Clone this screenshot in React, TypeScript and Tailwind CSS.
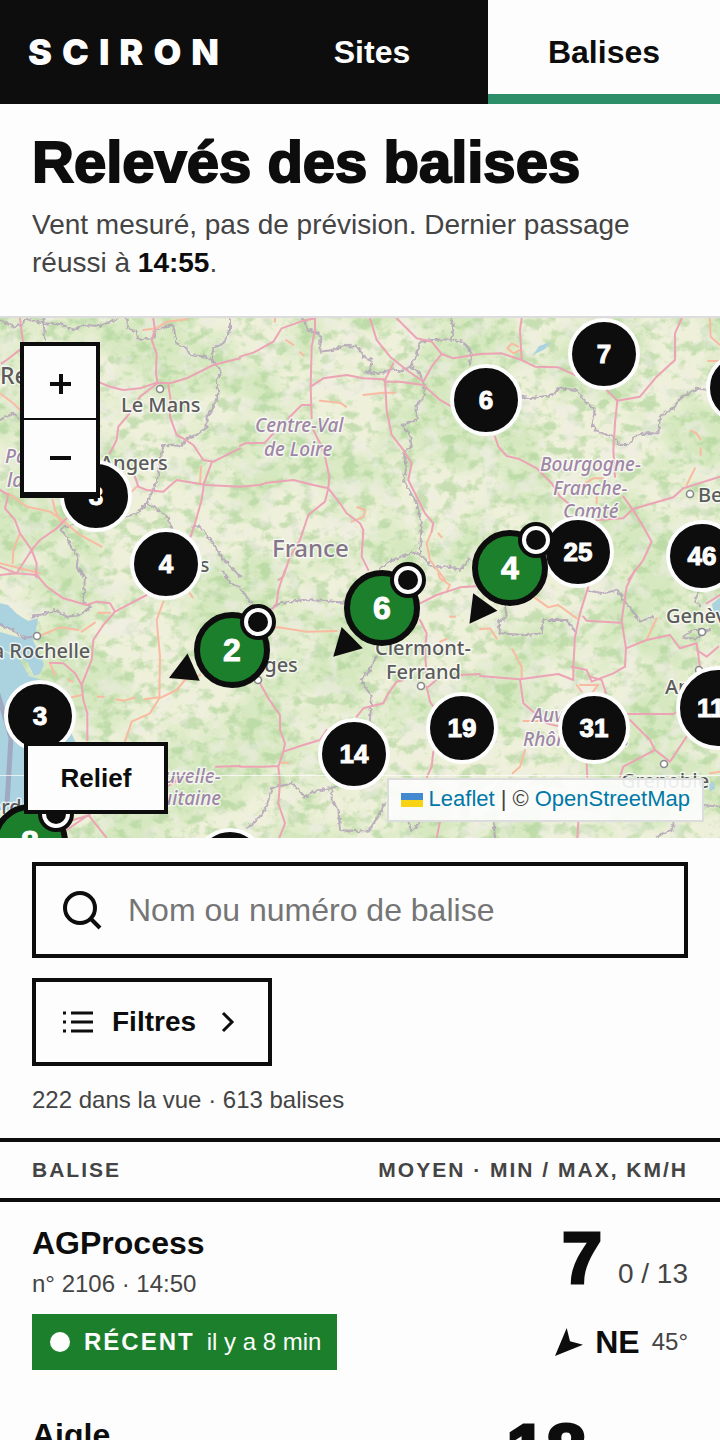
import { useState } from "react";
import { clsx } from "clsx";

type Cluster = { kind: "cluster"; x: number; y: number; count: number };
type Station = { kind: "station"; x: number; y: number; speed: number; heading: number };
type Marker = Cluster | Station;

// positions in map pixels, drawn north to south
const MARKERS: Marker[] = [
  { kind: "cluster", x: 604, y: 36, count: 7 },
  { kind: "cluster", x: 742, y: 70, count: 8 },
  { kind: "cluster", x: 486, y: 82, count: 6 },
  { kind: "cluster", x: 96, y: 178, count: 3 },
  { kind: "cluster", x: 578, y: 234, count: 25 },
  { kind: "cluster", x: 702, y: 238, count: 46 },
  { kind: "cluster", x: 166, y: 246, count: 4 },
  { kind: "station", x: 510, y: 250, speed: 4, heading: 216 },
  { kind: "station", x: 382, y: 290, speed: 6, heading: 225 },
  { kind: "station", x: 232, y: 332, speed: 2, heading: 246 },
  { kind: "cluster", x: 718, y: 390, count: 112 },
  { kind: "cluster", x: 40, y: 398, count: 3 },
  { kind: "cluster", x: 462, y: 410, count: 19 },
  { kind: "cluster", x: 594, y: 410, count: 31 },
  { kind: "cluster", x: 354, y: 436, count: 14 },
  { kind: "station", x: 30, y: 524, speed: 8, heading: 200 },
  { kind: "cluster", x: 230, y: 546, count: 5 },
];

type Tile = { x: number; y: number; motorways: string; trunks: string; borders: string };

const TILES: Tile[] = [
  {
    x: 0,
    y: -8,
    motorways:
      "M60 25L68 90 72 110 20 150 5 160M460 25L465 60 455 90 470 130 468 190 472 215M300 218L330 230 370 240 420 235 470 218 510 220 560 205 640 165 720 145M470 222L420 260 385 315 355 350 350 390 330 430M505 225L512 270 510 320 530 375 550 385 580 405 610 450 640 455 720 415M636 455L612 520 605 570 585 640 572 680M405 500L415 530 440 540 490 545 530 510 560 515 620 525 720 530M0 540L25 555 15 595 45 630 60 670 95 720 110 760 108 800M200 625L170 655 120 690 95 720 50 790 0 770",
    trunks:
      "M0 250L40 280 60 300M25 550L80 590 150 605 180 625 240 675 305 710M60 670L40 720 38 760M158 570L165 600 185 640M430 60L470 55 500 35 560 28M603 470L600 520M410 530L395 545M0 760L60 775 120 790",
    borders:
      "M0 30L40 50 65 45 80 25M85 30L130 40 180 42 220 60 250 45 300 48 350 28M130 25L135 90M380 25L385 55 410 65 415 88 460 85 465 60 520 45 530 100 560 115 570 135 620 140 650 165 665 190 650 210 655 250 640 290 620 320 620 350 590 375 560 385 545 410 520 405 490 405 485 430 475 500 450 560 440 580 410 610 380 620M440 580L470 595 505 625 515 660M690 25L690 60 670 100 640 115 635 145 650 165M180 655L200 680 215 715 235 740 230 770 250 800M180 655L240 640M580 650L600 650 640 700 660 735 720 800M0 330L40 310 60 325",
  },
  {
    x: 240,
    y: -8,
    motorways:
      "M0 140L40 128 100 95 125 55 190 32 225 25 225 60 215 110 212 230 215 325M212 230L250 205 320 195 370 205 430 208 435 215 480 215 550 225 600 270 635 290M390 25L410 90 450 140 500 180 550 215M470 25L530 85 575 95 605 132 640 145 720 132M605 132L575 170 550 215M460 160L435 210 440 300 455 375 490 420 515 460 505 510 540 580 555 610 580 640 575 665M215 285L185 285 145 325M0 408L15 400 75 398 100 370M220 360L240 400 255 440 268 500 265 535M0 530L60 525 80 518 160 510 220 525 265 535 300 580 320 610 360 640 370 660 365 740 385 780M265 535L255 575 205 615 180 690 150 740 130 800 115 810",
    trunks:
      "M138 90L160 105M180 127l12 10M240 272L300 278 318 290M370 255L430 248 465 248M352 592L375 600 372 620 335 635M575 665L560 700 570 750 615 810M595 670l10 12M105 25v10",
    borders:
      "M190 25L200 55 240 75 242 125 290 118 310 105 355 112 370 140 395 150 390 185 375 188 430 188 460 175 480 185 520 170M635 25L640 60 635 88 575 90 540 95 530 135 510 170 540 190 555 235 550 265 530 285 530 330 485 345 510 375 515 410 490 425 500 470 490 510 530 580 545 640 540 730 575 770 630 770 660 780 690 745M635 88L670 95 695 130 690 165M415 780L455 750 520 728 540 735",
  },
  {
    x: 480,
    y: -8,
    motorways:
      "M125 25L120 60 125 150M0 132L65 130 125 150 165 170 235 172 285 195M380 240L412 272 480 260 530 200 585 150 585 70 605 25M412 272L405 340 400 420 405 500M45 380L55 410 80 438 120 448 170 475 215 520 240 560 265 580M430 560L458 598 500 585 580 562 610 535 720 500M458 598L430 625 350 630M458 598L490 650 515 695 490 750 445 810",
    trunks:
      "M120 120L100 130 82 115 95 100 115 110M690 25L692 80 720 105M685 153h30M632 362L650 370 662 388M662 415v20M645 475L620 525M300 530L340 505 370 505M350 550v30",
    borders:
      "M125 260L150 265 220 255 235 235 290 240 315 275 345 300 335 340 350 365 400 380 420 405 445 405 465 378 500 370 535 370 540 320 580 295 605 260 655 235 680 240",
  },
  {
    x: 0,
    y: 252,
    motorways:
      "M0 15L50 10 110 15 140 50 190 85 260 105 290 95 330 100 345 125 440 75M345 125L310 165 280 210 275 270 245 345 250 390 262 430 262 510M150 278L190 280 225 310 245 345M648 590L720 588M500 650L550 620M200 780L265 735 320 804M270 735L220 750",
    trunks:
      "M125 195L180 172 235 180M245 185L285 158M295 128H330M490 95L470 150 480 260 478 385 530 360 555 330 600 315M478 385L450 430 395 455 375 515M215 382L245 375M293 380h18M348 388L370 392 405 383M435 388L478 382M570 70l8 12M150 280L165 315M205 330l12 5",
    borders:
      "M95 140L140 130 165 120 200 140 240 135 275 110 250 100 255 20 240 0M670 5L690 40 720 50M0 165L40 180 70 205 95 200",
  },
  {
    x: 240,
    y: 252,
    motorways:
      "M135 0L115 60 110 100 90 125M60 340L85 385 120 435 120 480 135 520 130 545 115 590 120 640 115 700 135 760 118 804M0 590L70 590 115 588M130 545L190 525 240 510 260 480M350 440L370 415 430 400 445 370 470 335 490 330M540 100L590 75 660 52 720 48M540 150L560 190 555 240 560 320M560 350L570 395 580 410M580 545L575 590 560 622M660 315L720 312M565 350L600 320M600 755L590 804",
    trunks: "M60 180L115 172 200 185 290 183M595 10L600 25 630 45 620 65M120 578h25M630 140h15M600 215l20 -8",
    borders:
      "M0 55L20 80 40 110 80 125 120 100 185 90 250 92 315 98M410 260L385 305 362 330 395 380 390 450M290 650L230 662 195 680 155 640 95 655 80 710 60 740 20 775M275 655L275 690 295 720 300 780 385 785 420 730 435 700M505 755L515 785 540 755",
  },
  {
    x: 480,
    y: 252,
    motorways:
      "M465 0L440 50 425 150 430 185 438 235 435 290 400 310 335 335 320 300 275 290M325 50L300 130 285 200 280 290 280 330 235 312 120 328 0 318M310 140L320 152 420 158M438 235L500 210 570 195 600 235 650 220 660 290M650 240L680 260 715 230M120 328L130 400 200 460 240 470M440 432L580 432 600 420M450 450L510 510 525 540 430 590 420 620M525 540L570 575 620 500M320 580L322 620M330 320L365 330 378 370M680 100L720 75M295 755L292 804",
    trunks:
      "M160 80L205 112 235 105 290 145M97 238L125 290 125 325M530 145L500 210M290 345L305 365M300 345H355L335 370M0 178L30 175 50 205M135 540L120 590 98 610M130 453h60M690 610L720 605",
    borders:
      "M325 62L370 70 410 60 440 100 480 155 520 140M75 105L80 140 55 155 60 190 140 195 185 190 190 150 260 150 290 190M655 70L645 90 660 110M610 200L640 180 690 180 650 205 615 205M40 750L45 804M580 760L575 780 530 800M670 705L720 710",
  },
];

const TOWNS = [
  { x: 0, y: 66, name: "Rennes", size: 23 },
  { x: 121, y: 94, name: "Le Mans", size: 20 },
  { x: 100, y: 152, name: "Angers", size: 20 },
  { x: 137, y: 254, name: "Poitiers", size: 20 },
  { x: 217, y: 354, name: "Limoges", size: 20 },
  { x: -18, y: 340, name: "La Rochelle", size: 20 },
  { x: 375, y: 337, name: "Clermont-", size: 20 },
  { x: 386, y: 361, name: "Ferrand", size: 20 },
  { x: 698, y: 184, name: "Besançon", size: 20 },
  { x: 666, y: 305, name: "Genève", size: 20 },
  { x: 665, y: 376, name: "Annecy", size: 20 },
  { x: 621, y: 470, name: "Grenoble", size: 20 },
  { x: -24, y: 496, name: "Bordeaux", size: 20 },
];

const REGIONS = [
  { x: 5, y: 145, name: "Pays de" },
  { x: 7, y: 169, name: "la Loire" },
  { x: 255, y: 114, name: "Centre-Val" },
  { x: 264, y: 138, name: "de Loire" },
  { x: 540, y: 153, name: "Bourgogne-" },
  { x: 553, y: 177, name: "Franche-" },
  { x: 563, y: 200, name: "Comté" },
  { x: 140, y: 465, name: "Nouvelle-" },
  { x: 139, y: 487, name: "Aquitaine" },
  { x: 532, y: 404, name: "Auvergne-" },
  { x: 523, y: 428, name: "Rhône-Alpes" },
];

const TOWN_DOTS = [
  [160, 71],
  [37, 318],
  [421, 368],
  [690, 176],
  [702, 314],
  [664, 446],
  [258, 362],
  [699, 352],
];

const STATIONS = [
  { name: "AGProcess", id: "2106", time: "14:50", age: "il y a 8 min", mean: 7, min: 0, max: 13, dir: "NE", deg: 45 },
  { name: "Aigle", id: "1714", time: "14:48", age: "il y a 10 min", mean: 18, min: 14, max: 22, dir: "NE", deg: 50 },
];

function BaseMap() {
  return (
    <svg
      className="block h-full w-full"
      viewBox="0 0 720 520"
      preserveAspectRatio="xMidYMid slice"
      aria-hidden="true"
    >
      <defs>
        <filter id="woods" x="0" y="0" width="100%" height="100%" colorInterpolationFilters="sRGB">
          <feTurbulence type="fractalNoise" baseFrequency="0.07 0.085" numOctaves="4" seed="11" />
          <feColorMatrix values="0 0 0 0 0.66  0 0 0 0 0.82  0 0 0 0 0.58  5 0 0 0 -2.4" />
        </filter>
        <filter id="meadows" x="0" y="0" width="100%" height="100%" colorInterpolationFilters="sRGB">
          <feTurbulence type="fractalNoise" baseFrequency="0.01 0.012" numOctaves="6" seed="4" />
          <feColorMatrix values="0 0 0 0 0.8  0 0 0 0 0.9  0 0 0 0 0.71  0 5 0 0 -2.1" />
        </filter>
        <filter id="towns" x="0" y="0" width="100%" height="100%" colorInterpolationFilters="sRGB">
          <feTurbulence type="fractalNoise" baseFrequency="0.05" numOctaves="5" seed="23" />
          <feColorMatrix values="0 0 0 0 0.94  0 0 0 0 0.93  0 0 0 0 0.9  0 0 5 0 -2.5" />
        </filter>
        <filter id="wiggle" x="-5%" y="-5%" width="110%" height="110%" colorInterpolationFilters="sRGB">
          <feTurbulence type="fractalNoise" baseFrequency="0.1" numOctaves="1" seed="7" />
          <feDisplacementMap in="SourceGraphic" scale="16" xChannelSelector="R" yChannelSelector="G" />
        </filter>
      </defs>

      <rect width="720" height="520" fill="#eef0d9" />
      <rect width="720" height="520" filter="url(#meadows)" opacity="0.7" />
      <rect width="720" height="520" filter="url(#woods)" opacity="0.55" />
      <rect width="720" height="520" filter="url(#towns)" opacity="0.55" />

      {/* water */}
      <g fill="#aad3df">
        <path d="M-6 284L8 287 17 296 28 303 38 300 36 313 33 322 44 346 40 356 34 358 28 345 14 336 0 331 20 342 29 358 48 364 66 404 76 425 76 440 26 440 25 492-6 492Z" />
        <path d="M533 37l6-9 12-4-6 7z" />
        <path d="M712 286l10-8v14l-8 6z" />
        <path d="M708 466l6-2 1 7-5 2z" />
      </g>
      <path d="M0 308l14 4 12 9-12-3-14-4z" fill="#e6ecd0" />
      <path d="M-4 370L4 396 11 420 7 486" fill="none" stroke="#9a97b5" strokeWidth="5" opacity="0.7" />

      <g fill="none" strokeLinejoin="round" strokeLinecap="round">
        {TILES.map((tile) => (
          <g key={`${tile.x}:${tile.y}`} transform={`translate(${tile.x} ${tile.y}) scale(0.3333)`}>
            <path d={tile.borders} stroke="#b3a3b8" strokeWidth="6" opacity="0.85" filter="url(#wiggle)" />
            <path d={tile.trunks} stroke="#f8bba2" strokeWidth="6" />
            <path d={tile.motorways} stroke="#eda3b6" strokeWidth="6" />
          </g>
        ))}
      </g>

      {TOWN_DOTS.map(([x, y]) => (
        <circle key={`${x}-${y}`} cx={x} cy={y} r="3.5" fill="#fff" stroke="#8a8a8a" strokeWidth="1.6" />
      ))}

      <g
        fontFamily="'Noto Sans', sans-serif"
        fontWeight="500"
        stroke="#fff"
        strokeOpacity="0.7"
        strokeWidth="3"
        strokeLinejoin="round"
        paintOrder="stroke"
      >
        {TOWNS.map((town) => (
          <text key={town.name} x={town.x} y={town.y} fontSize={town.size} fill="#5c5c5c">
            {town.name}
          </text>
        ))}
        {REGIONS.map((region) => (
          <text key={region.name} x={region.x} y={region.y} fontSize="19" fontStyle="italic" fill="#9f86a6">
            {region.name}
          </text>
        ))}
        <text x="272" y="239" fontSize="24" fill="#84758a">
          France
        </text>
      </g>
      <path d="M0 457.5H720" stroke="#fff" strokeOpacity="0.7" />
    </svg>
  );
}

function ClusterMarker({ x, y, count }: Cluster) {
  return (
    <button
      type="button"
      aria-label={`${count} balises`}
      className={clsx(
        "absolute flex -translate-x-1/2 -translate-y-1/2 items-center justify-center rounded-full border-4 border-[#fdfdfd] bg-[#0d0d0d] text-[26px] leading-8 font-bold text-[#fdfdfd] [-webkit-text-stroke:1px_#fdfdfd]",
        count >= 100 ? "size-[84px]" : "size-[72px]"
      )}
      style={{ left: x, top: y }}
    >
      {count}
    </button>
  );
}

function StationMarker({ x, y, speed, heading }: Station) {
  return (
    <button
      type="button"
      aria-label={`${speed} km/h`}
      className="absolute flex size-[76px] -translate-x-1/2 -translate-y-1/2 items-center justify-center rounded-full border-6 border-[#0d0d0d] bg-[#1b7f2c] text-[32px] font-bold text-[#fdfdfd] [-webkit-text-stroke:1px_#fdfdfd]"
      style={{ left: x, top: y }}
    >
      <svg className="absolute -inset-[38px] size-[140px]" viewBox="-70 -70 140 140" aria-hidden="true">
        <polygon points="0,-69 -15,-42 15,-42" fill="#0d0d0d" transform={`rotate(${heading})`} />
      </svg>
      <span className="relative">{speed}</span>
      <span className="absolute -top-3.5 -right-3 size-9 rounded-full border-4 border-[#0d0d0d] bg-[#fdfdfd] p-1">
        <span className="block size-full rounded-full bg-[#0d0d0d]" />
      </span>
    </button>
  );
}

function WindMap() {
  const [relief, setRelief] = useState(false);

  return (
    <section aria-label="Carte des balises" className="relative h-[520px] w-full overflow-hidden bg-[#eef0d9]">
      <BaseMap />
      {MARKERS.map((m) =>
        m.kind === "cluster" ? (
          <ClusterMarker key={`${m.x}-${m.y}`} {...m} />
        ) : (
          <StationMarker key={`${m.x}-${m.y}`} {...m} />
        )
      )}

      {/* Zoom control */}
      <div className="absolute top-6 left-5 flex w-20 flex-col border-4 border-b-6 border-[#0d0d0d] bg-[#fdfdfd]">
        <button type="button" aria-label="Zoomer" className="flex h-[74px] items-center justify-center border-b-2 border-[#0d0d0d]">
          <svg width="22" height="24" viewBox="0 0 22 24" stroke="#0d0d0d" strokeWidth="4">
            <path d="M1 14H22M12 4V24" />
          </svg>
        </button>
        <button type="button" aria-label="Dézoomer" className="flex h-[72px] items-center justify-center">
          <svg width="22" height="24" viewBox="0 0 22 24" stroke="#0d0d0d" strokeWidth="4">
            <path d="M1 14H22" />
          </svg>
        </button>
      </div>

      <button
        type="button"
        aria-pressed={relief}
        onClick={() => setRelief(!relief)}
        className="absolute bottom-6 left-6 flex h-[72px] w-36 items-center justify-center border-4 border-[#0d0d0d] bg-[#fdfdfd] text-[26px] font-bold"
      >
        Relief
      </button>

      <div className="absolute right-4 bottom-4 flex h-11 items-center gap-1.5 border-2 border-[#dcdcdc] bg-[#fdfdfd]/90 px-3 pb-1 text-[22px] text-[#444]">
        <a href="https://leafletjs.com" className="flex items-center gap-1.5 text-[#0078a8]">
          <svg className="mt-1" width="22" height="14" viewBox="0 0 22 14" aria-hidden="true">
            <path fill="#4389cf" d="M0 0h22v7H0z" />
            <path fill="#f8d313" d="M0 7h22v7H0z" />
          </svg>
          Leaflet
        </a>
        <span>| ©</span>
        <a href="https://www.openstreetmap.org/copyright" className="text-[#0078a8]">
          OpenStreetMap
        </a>
      </div>
    </section>
  );
}

export default function App() {
  const [query, setQuery] = useState("");
  const rows = STATIONS.filter((s) => `${s.name} ${s.id}`.toLowerCase().includes(query.toLowerCase()));

  return (
    <div className="min-h-screen bg-[#fdfdfd] font-['Liberation_Sans',Arial,sans-serif] text-[#0d0d0d]">
      <header className="flex h-[104px] bg-[#0d0d0d] text-[#fdfdfd]">
        <a
          href="#"
          className="flex w-64 shrink-0 items-center pl-7 font-[Inter,sans-serif] text-4xl font-black tracking-[10px]"
        >
          SCIRON
        </a>
        <nav className="flex flex-1 text-[32px] font-bold">
          <a href="#sites" className="flex flex-1 items-center justify-center">
            Sites
          </a>
          <a
            href="#balises"
            aria-current="page"
            className="flex flex-1 items-center justify-center border-b-10 border-[#2d8f69] bg-[#fdfdfd] pt-2.5 text-[#0d0d0d]"
          >
            Balises
          </a>
        </nav>
      </header>

      <main>
        <div className="border-b-2 border-[#dcdcdc] px-8 pt-6 pb-[34px]">
          <h1 className="text-[58px] leading-[68px] font-bold [-webkit-text-stroke:2px_#0d0d0d]">Relevés des balises</h1>
          <p className="mt-2.5 text-[28px] leading-[38px] text-[#444]">
            Vent mesuré, pas de prévision. Dernier passage réussi à <strong className="text-[#0d0d0d]">14:55</strong>.
          </p>
        </div>

        <WindMap />

        {/* Search and filters */}
        <div className="flex flex-col items-start px-8 pt-6">
          <label className="flex h-24 w-full items-center gap-6 border-4 border-[#0d0d0d] px-6">
            <svg className="shrink-0" width="44" height="44" viewBox="0 0 44 44" fill="none" stroke="#0d0d0d" strokeWidth="4">
              <circle cx="20" cy="20" r="15" />
              <path d="M31 31L40 40" />
            </svg>
            <input
              type="search"
              aria-label="Nom ou numéro de balise"
              placeholder="Nom ou numéro de balise"
              value={query}
              onChange={(e) => setQuery(e.target.value)}
              className="min-w-0 flex-1 bg-transparent text-[32px] outline-none placeholder:text-[#757575]"
            />
          </label>

          <button type="button" className="mt-5 flex h-[88px] items-center border-4 border-[#0d0d0d] pr-7 pl-6 text-[28px] font-bold">
            <svg width="36" height="36" viewBox="0 0 36 36" fill="none" stroke="#0d0d0d" strokeWidth="3">
              <path d="M3 9H6M11 9H33M3 18H6M11 18H33M3 27H6M11 27H33" />
            </svg>
            <span className="pr-5 pl-4">Filtres</span>
            <svg width="24" height="28" viewBox="0 0 24 28" fill="none" stroke="#0d0d0d" strokeWidth="3">
              <path d="M7 5L16 14L7 23" />
            </svg>
          </button>

          <p className="mt-4 text-2xl leading-9 text-[#444]">222 dans la vue · 613 balises</p>
        </div>

        <table className="mt-5 w-full border-separate border-spacing-0">
          <thead>
            <tr className="h-16 text-[21px] tracking-[2px] text-[#444] uppercase">
              <th scope="col" className="border-y-4 border-[#0d0d0d] pl-8 text-left font-bold">
                Balise
              </th>
              <th scope="col" className="border-y-4 border-[#0d0d0d] pr-8 text-right font-bold">
                Moyen · min / max, km/h
              </th>
            </tr>
          </thead>
          <tbody>
            {rows.map((s) => (
              <tr key={s.id} className="h-48 align-top">
                <td className="pt-5 pl-8">
                  <div className="text-[32px] leading-[42px] font-bold">{s.name}</div>
                  <div className="mt-0.5 text-2xl leading-9 text-[#444]">
                    n° {s.id} · {s.time}
                  </div>
                  <div className="mt-3 inline-flex h-14 items-center bg-[#1b7f2c] pr-4 pl-[18px] text-2xl text-[#fdfdfd]">
                    <span className="mr-3.5 size-5 rounded-full bg-[#fdfdfd]" />
                    <span className="mr-3 font-bold tracking-[2px]">RÉCENT</span>
                    <span>{s.age}</span>
                  </div>
                </td>
                <td className="pt-5 pr-8">
                  <div className="flex h-[72px] items-baseline justify-end gap-4">
                    <span className="text-[72px] leading-[72px] font-bold [-webkit-text-stroke:3px_#0d0d0d]">{s.mean}</span>
                    <span className="text-[28px] text-[#444]">
                      {s.min} / {s.max}
                    </span>
                  </div>
                  <div className="mt-5 flex h-14 items-center justify-end gap-3">
                    <svg width="28" height="28" viewBox="0 0 28 28" aria-hidden="true">
                      <polygon points="11.7,0 15,13.3 28,16.7 0,28" fill="#0d0d0d" />
                    </svg>
                    <span className="text-[32px] font-bold">{s.dir}</span>
                    <span className="text-2xl text-[#444]">{s.deg}°</span>
                  </div>
                </td>
              </tr>
            ))}
          </tbody>
        </table>
      </main>
    </div>
  );
}
